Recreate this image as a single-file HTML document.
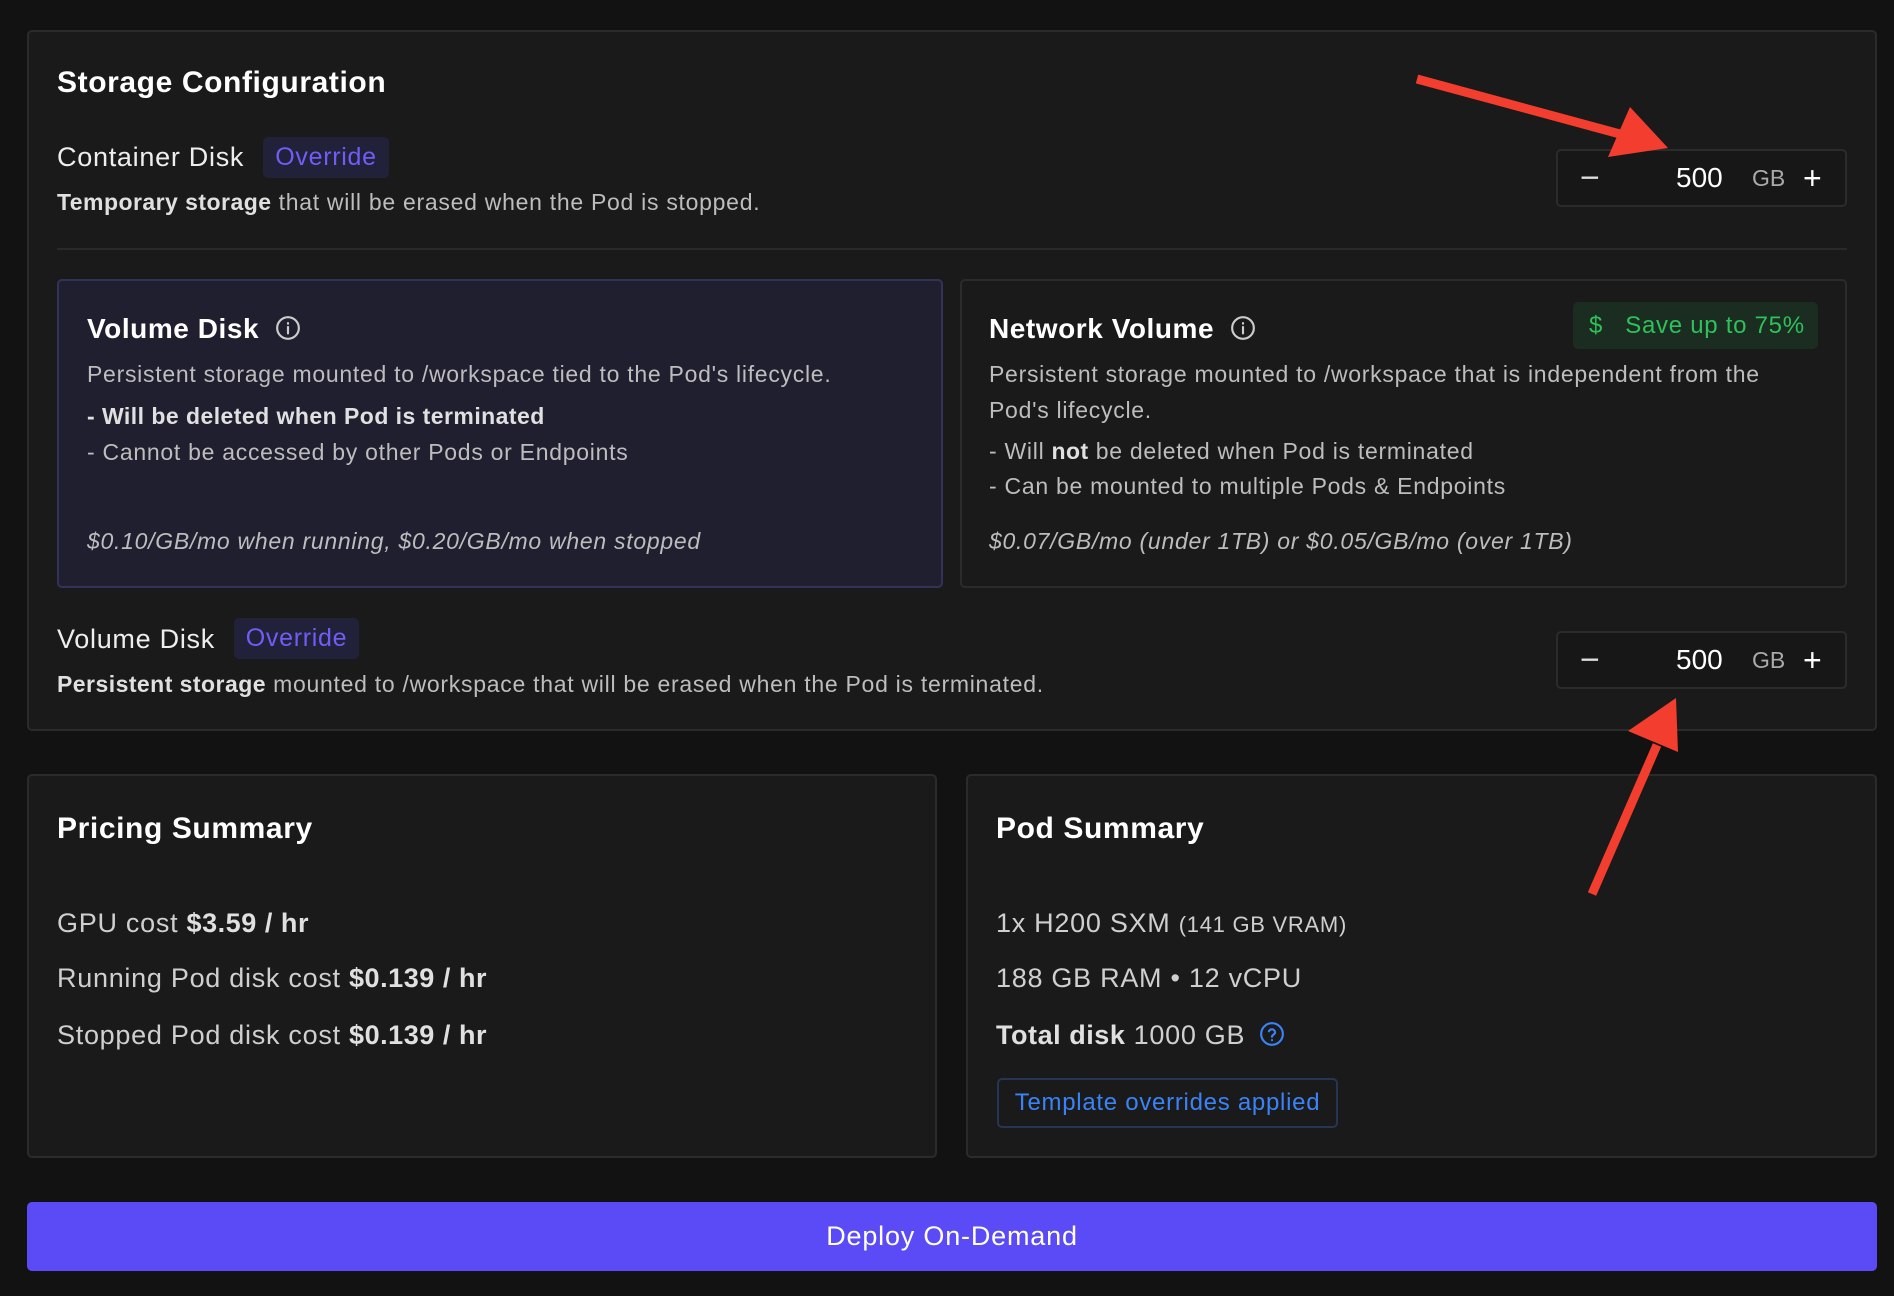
<!DOCTYPE html>
<html><head><meta charset="utf-8"><style>
*{margin:0;padding:0;box-sizing:border-box}
body{width:1894px;height:1296px;background:#121212;font-family:"Liberation Sans",sans-serif;color:#cfcfcf;position:relative;overflow:hidden;letter-spacing:0.045em}
.a{position:absolute;white-space:nowrap}
.card{position:absolute;background:#1a1a1a;border:2px solid #2b2b2b;border-radius:5px}
.t{line-height:40px}
.h{color:#fff;font-weight:bold;font-size:30px;letter-spacing:0.02em}
.b{font-weight:bold;color:#e0e0e0;letter-spacing:0.02em}
.badge{position:absolute;background:#22213a;color:#6f5df5;border-radius:5px;font-size:25px;line-height:41px;text-align:center}
.step{position:absolute;border:2px solid #2b2b2b;border-radius:5px;background:#171717;width:291px;height:58px;letter-spacing:0}
.step span{position:absolute;top:0;line-height:54px}
</style></head><body>
<div class="card" style="left:27px;top:30px;width:1850px;height:701px"></div>
<div class="a t h" style="left:57px;top:63px">Storage Configuration</div>
<div class="a t" style="left:57px;top:137px;font-size:27px;color:#eee">Container Disk</div>
<div class="badge" style="left:263px;top:137px;width:126px">Override</div>
<div class="a t" style="left:57px;top:182px;font-size:23px;color:#bdbdbd"><span class="b">Temporary storage</span> that will be erased when the Pod is stopped.</div>
<div class="step" style="left:1556px;top:149px"><span style="left:22px;font-size:34px;color:#ddd">−</span><span style="left:118px;font-size:28px;color:#fff">500</span><span style="left:194px;font-size:23px;color:#aaa">GB</span><span style="left:245px;font-size:32px;color:#fff">+</span></div>
<div class="a" style="left:57px;top:248px;width:1790px;height:2px;background:#2a2a2a"></div>

<div class="a" style="left:57px;top:279px;width:886px;height:309px;background:#1f1f30;border:2px solid #33335a;border-radius:5px"></div>
<div class="a t" style="left:87px;top:309px;font-size:28px;color:#fff;font-weight:bold;letter-spacing:0.02em">Volume Disk <svg width="26" height="26" viewBox="0 0 24 24" style="vertical-align:-3px;margin-left:8px"><circle cx="12" cy="12" r="10" fill="none" stroke="#ccc" stroke-width="2"/><path d="M12 11v6M12 7.5v.5" stroke="#ccc" stroke-width="2" stroke-linecap="round"/></svg></div>
<div class="a t" style="left:87px;top:354px;font-size:23px;color:#bdbdbd">Persistent storage mounted to /workspace tied to the Pod's lifecycle.</div>
<div class="a t" style="left:87px;top:396px;font-size:23px" ><span class="b">- Will be deleted when Pod is terminated</span></div>
<div class="a t" style="left:87px;top:432px;font-size:23px;color:#bdbdbd">- Cannot be accessed by other Pods or Endpoints</div>
<div class="a t" style="left:87px;top:521px;font-size:23px;color:#bdbdbd;font-style:italic">$0.10/GB/mo when running, $0.20/GB/mo when stopped</div>

<div class="a" style="left:960px;top:279px;width:887px;height:309px;background:#1a1a1a;border:2px solid #2b2b2b;border-radius:5px"></div>
<div class="a t" style="left:989px;top:309px;font-size:28px;color:#fff;font-weight:bold;letter-spacing:0.02em">Network Volume <svg width="26" height="26" viewBox="0 0 24 24" style="vertical-align:-3px;margin-left:8px"><circle cx="12" cy="12" r="10" fill="none" stroke="#ccc" stroke-width="2"/><path d="M12 11v6M12 7.5v.5" stroke="#ccc" stroke-width="2" stroke-linecap="round"/></svg></div>
<div class="a" style="left:1573px;top:302px;width:245px;height:47px;background:#1b2d20;border-radius:5px;color:#2ec05a;font-size:24px;line-height:47px;padding-left:16px;letter-spacing:0.03em">$&nbsp;&nbsp; Save up to 75%</div>
<div class="a" style="left:989px;top:356px;font-size:23px;color:#bdbdbd;line-height:36px">Persistent storage mounted to /workspace that is independent from the<br>Pod's lifecycle.</div>
<div class="a t" style="left:989px;top:431px;font-size:23px;color:#bdbdbd">- Will <span class="b">not</span> be deleted when Pod is terminated</div>
<div class="a t" style="left:989px;top:466px;font-size:23px;color:#bdbdbd">- Can be mounted to multiple Pods &amp; Endpoints</div>
<div class="a t" style="left:989px;top:521px;font-size:23px;color:#bdbdbd;font-style:italic">$0.07/GB/mo (under 1TB) or $0.05/GB/mo (over 1TB)</div>

<div class="a t" style="left:57px;top:619px;font-size:27px;color:#eee">Volume Disk</div>
<div class="badge" style="left:234px;top:618px;width:125px">Override</div>
<div class="a t" style="left:57px;top:664px;font-size:23px;color:#bdbdbd"><span class="b">Persistent storage</span> mounted to /workspace that will be erased when the Pod is terminated.</div>
<div class="step" style="left:1556px;top:631px"><span style="left:22px;font-size:34px;color:#ddd">−</span><span style="left:118px;font-size:28px;color:#fff">500</span><span style="left:194px;font-size:23px;color:#aaa">GB</span><span style="left:245px;font-size:32px;color:#fff">+</span></div>

<div class="card" style="left:27px;top:774px;width:910px;height:384px"></div>
<div class="a t h" style="left:57px;top:809px">Pricing Summary</div>
<div class="a t" style="left:57px;top:903px;font-size:27px">GPU cost <span class="b">$3.59 / hr</span></div>
<div class="a t" style="left:57px;top:958px;font-size:27px">Running Pod disk cost <span class="b">$0.139 / hr</span></div>
<div class="a t" style="left:57px;top:1015px;font-size:27px">Stopped Pod disk cost <span class="b">$0.139 / hr</span></div>

<div class="card" style="left:966px;top:774px;width:911px;height:384px"></div>
<div class="a t h" style="left:996px;top:809px">Pod Summary</div>
<div class="a t" style="left:996px;top:903px;font-size:27px">1x H200 SXM <span style="font-size:22px">(141 GB VRAM)</span></div>
<div class="a t" style="left:996px;top:958px;font-size:27px">188 GB RAM • 12 vCPU</div>
<div class="a t" style="left:996px;top:1015px;font-size:27px"><span class="b">Total disk</span> 1000 GB <svg width="26" height="26" viewBox="0 0 24 24" style="vertical-align:-3px;margin-left:6px"><circle cx="12" cy="12" r="10" fill="none" stroke="#3b82f6" stroke-width="2"/><path d="M9.2 9.5a2.9 2.9 0 0 1 5.6 1c0 2-2.8 2.2-2.8 4M12 17.6v.2" fill="none" stroke="#3b82f6" stroke-width="2" stroke-linecap="round"/></svg></div>
<div class="a" style="left:997px;top:1078px;width:341px;height:50px;border:2px solid #263553;border-radius:5px;color:#3b82f6;font-size:24px;line-height:46px;text-align:center;letter-spacing:0.03em">Template overrides applied</div>

<div class="a" style="left:27px;top:1202px;width:1850px;height:69px;background:#5b4bf6;border-radius:5px;color:#fff;font-size:27px;line-height:69px;text-align:center;letter-spacing:0.03em">Deploy On-Demand</div>

<svg class="a" style="left:0;top:0" width="1894" height="1296">
<line x1="1417" y1="79" x2="1620" y2="134" stroke="#f33e2f" stroke-width="9"/>
<polygon points="1668,148 1608,157 1630,107" fill="#f33e2f"/>
<line x1="1592" y1="894" x2="1657" y2="745" stroke="#f33e2f" stroke-width="9"/>
<polygon points="1676,698 1678,752 1628,731" fill="#f33e2f"/>
</svg>
</body></html>
